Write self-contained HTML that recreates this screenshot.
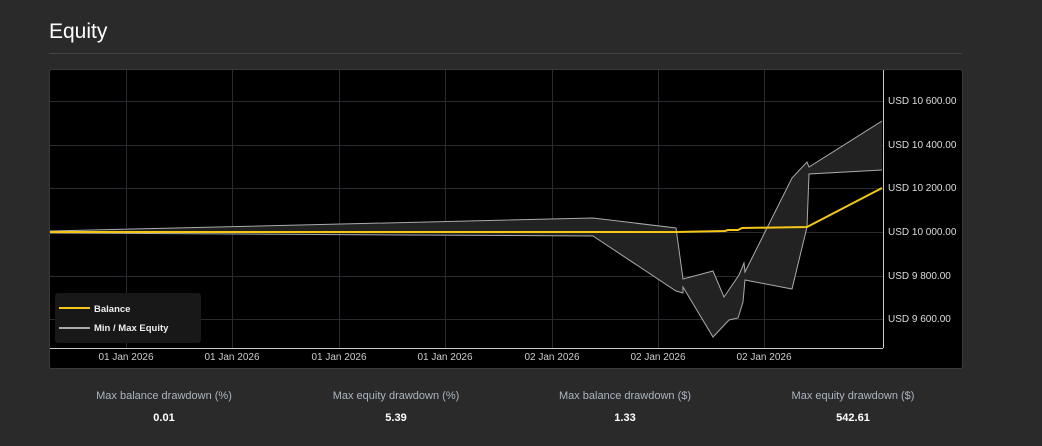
<!DOCTYPE html>
<html><head><meta charset="utf-8"><style>
body{margin:0;width:1042px;height:446px;background:#2a2a2a;font-family:"Liberation Sans",sans-serif;overflow:hidden;position:relative}
h1{position:absolute;left:49px;top:20px;margin:0;font-size:21px;font-weight:normal;color:#fff}
.hr{position:absolute;left:49px;top:53px;width:913px;height:1px;background:#444}
.stat{position:absolute;top:390px;width:230px;text-align:center}
.stat .l{font-size:11px;color:#aab4c0}
.stat .v{font-size:11px;font-weight:bold;color:#fff;margin-top:10px}
</style></head><body>
<h1>Equity</h1><div class="hr"></div>
<svg style="position:absolute;left:0;top:0" width="1042" height="446">
<rect x="49.5" y="69.5" width="913" height="299" rx="2" fill="#000" stroke="#3a3a3a"/>
<g stroke="#2a2a30" stroke-width="1">
<line x1="126.5" y1="70" x2="126.5" y2="348"/><line x1="232.5" y1="70" x2="232.5" y2="348"/>
<line x1="339.5" y1="70" x2="339.5" y2="348"/><line x1="445.5" y1="70" x2="445.5" y2="348"/>
<line x1="552.5" y1="70" x2="552.5" y2="348"/><line x1="658.5" y1="70" x2="658.5" y2="348"/>
<line x1="764.5" y1="70" x2="764.5" y2="348"/>
<line x1="50" y1="101.5" x2="883" y2="101.5"/><line x1="50" y1="145.5" x2="883" y2="145.5"/>
<line x1="50" y1="188.5" x2="883" y2="188.5"/><line x1="50" y1="232.5" x2="883" y2="232.5"/>
<line x1="50" y1="276.5" x2="883" y2="276.5"/><line x1="50" y1="319.5" x2="883" y2="319.5"/>
</g>
<line x1="883.5" y1="70" x2="883.5" y2="348" stroke="#ccc"/>
<line x1="50" y1="348.5" x2="883" y2="348.5" stroke="#ccc"/>
<path d="M50,231 L593,218 L676,228 L683,279 L713,271 L724,297 L739,275 L744,263 L745,272 L792,178 L807,162 L809,167 L882,121 L882,170 L809,174 L807,227 L792,289 L745,280 L743,302 L738,318 L729,320 L713,337 L683,287 L683,293 L676,291 L593,236 L50,233 Z" fill="#222"/>
<polyline points="50,231 593,218 676,228 683,279 713,271 724,297 739,275 744,263 745,272 792,178 807,162 809,167 882,121" fill="none" stroke="#aaa"/>
<polyline points="50,233 593,236 676,291 683,293 683,287 713,337 729,320 738,318 743,302 745,280 792,289 807,227 809,174 882,170" fill="none" stroke="#aaa"/>
<polyline points="50,232 676,232 725,231 728,230 738,230 742,228 807,227 882,188" fill="none" stroke="#f5c518" stroke-width="2"/>
<g font-size="10" fill="#ddd">
<text x="888" y="104">USD 10 600.00</text><text x="888" y="148">USD 10 400.00</text>
<text x="888" y="191">USD 10 200.00</text><text x="888" y="235">USD 10 000.00</text>
<text x="888" y="279">USD 9 800.00</text><text x="888" y="322">USD 9 600.00</text>
</g>
<g font-size="10" fill="#ccc" text-anchor="middle">
<text x="126" y="360">01 Jan 2026</text><text x="232" y="360">01 Jan 2026</text>
<text x="339" y="360">01 Jan 2026</text><text x="445" y="360">01 Jan 2026</text>
<text x="552" y="360">02 Jan 2026</text><text x="658" y="360">02 Jan 2026</text>
<text x="764" y="360">02 Jan 2026</text>
</g>
<rect x="55" y="293" width="146" height="50" rx="3" fill="#181818"/>
<line x1="59" y1="308" x2="90" y2="308" stroke="#f5c518" stroke-width="2"/>
<line x1="59" y1="328" x2="90" y2="328" stroke="#aaa" stroke-width="2"/>
<text x="94" y="312" font-size="9.5" font-weight="bold" fill="#eee">Balance</text>
<text x="94" y="331" font-size="9.5" font-weight="bold" fill="#eee">Min / Max Equity</text>
</svg>
<div class="stat" style="left:49px"><div class="l">Max balance drawdown (%)</div><div class="v">0.01</div></div>
<div class="stat" style="left:281px"><div class="l">Max equity drawdown (%)</div><div class="v">5.39</div></div>
<div class="stat" style="left:510px"><div class="l">Max balance drawdown ($)</div><div class="v">1.33</div></div>
<div class="stat" style="left:738px"><div class="l">Max equity drawdown ($)</div><div class="v">542.61</div></div>
</body></html>
